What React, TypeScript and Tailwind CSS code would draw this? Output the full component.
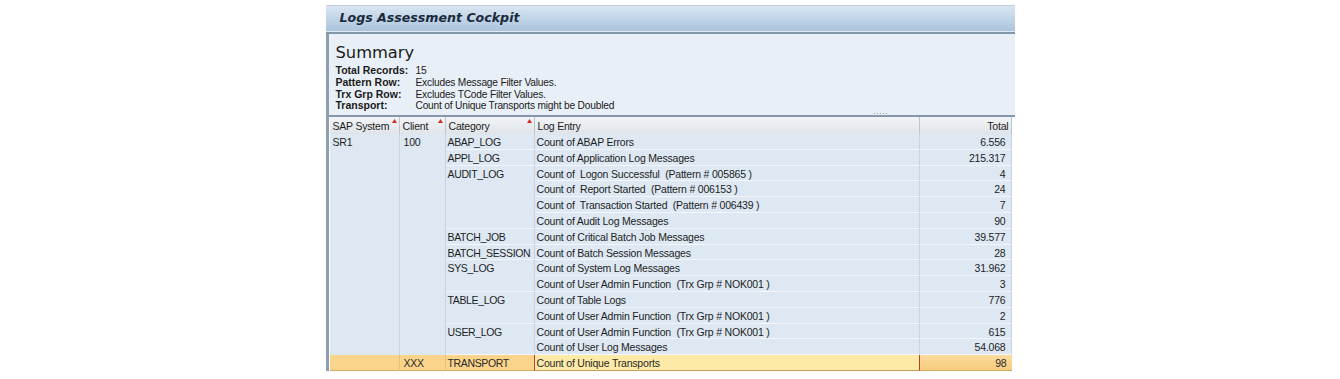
import React from 'react';

type Row = {
  cat?: string;
  span?: number;
  entry: string;
  total: string;
};

const rows: Row[] = [
  { cat: 'ABAP_LOG', span: 1, entry: 'Count of ABAP Errors', total: '6.556' },
  { cat: 'APPL_LOG', span: 1, entry: 'Count of Application Log Messages', total: '215.317' },
  { cat: 'AUDIT_LOG', span: 4, entry: 'Count of  Logon Successful  (Pattern # 005865 )', total: '4' },
  { entry: 'Count of  Report Started  (Pattern # 006153 )', total: '24' },
  { entry: 'Count of  Transaction Started  (Pattern # 006439 )', total: '7' },
  { entry: 'Count of Audit Log Messages', total: '90' },
  { cat: 'BATCH_JOB', span: 1, entry: 'Count of Critical Batch Job Messages', total: '39.577' },
  { cat: 'BATCH_SESSION', span: 1, entry: 'Count of Batch Session Messages', total: '28' },
  { cat: 'SYS_LOG', span: 2, entry: 'Count of System Log Messages', total: '31.962' },
  { entry: 'Count of User Admin Function  (Trx Grp # NOK001 )', total: '3' },
  { cat: 'TABLE_LOG', span: 2, entry: 'Count of Table Logs', total: '776' },
  { entry: 'Count of User Admin Function  (Trx Grp # NOK001 )', total: '2' },
  { cat: 'USER_LOG', span: 2, entry: 'Count of User Admin Function  (Trx Grp # NOK001 )', total: '615' },
  { entry: 'Count of User Log Messages', total: '54.068' },
];

const spanClass: Record<number, string> = {
  1: 'row-span-1',
  2: 'row-span-2',
  4: 'row-span-4',
};

const cell =
  'whitespace-pre leading-[15px] pt-[1px] border-r border-b border-r-[#c6d3e0] border-b-[#f3f7fb] bg-[#dde8f3] text-[#1e1e1e]';

// little red sort marker in the column header
const SortUp = () => (
  <svg width="5" height="4" viewBox="0 0 5 4" className="absolute top-[2px] right-[2px]">
    <path d="M2.5 0 L5 4 L0 4 Z" fill="#d42a1e" />
  </svg>
);

const HeadCell = ({ label, sort, right }: { label: string; sort?: boolean; right?: boolean }) => (
  <div
    className={`relative px-[3px] pt-[2px] leading-[15px] border-r border-[#bcc5ce] bg-linear-to-b from-[#f2f4f6] to-[#e0e4e9] text-[#1e1e1e] ${
      right ? 'text-right pr-[2px]' : ''
    }`}
  >
    {label}
    {sort && <SortUp />}
  </div>
);

export default function App() {
  return (
    <div className="w-full h-[379px] bg-white overflow-hidden font-['Liberation_Sans',Arial,sans-serif]">
      <div className="mx-auto w-[689px] pt-[5px]">
        {/* Title bar */}
        <div className="h-[26px] border-t border-[#c3ccd6] bg-linear-to-b from-[#d9e6f2] to-[#aac4dd] flex items-center pl-[14px]">
          <span className="font-['DejaVu_Sans',sans-serif] font-bold italic text-[12.6px] text-[#1b2a3c]">
            Logs Assessment Cockpit
          </span>
        </div>
        <div className="h-px bg-[#e2eaf2]" />
        <div className="h-[2px] bg-[#8496a9]" />

        <div className="border-l-[3px] border-[#8e9eb1]">
          {/* Summary panel */}
          <div className="h-[83px] bg-[#e9eff6] border-b-2 border-[#8497ab] flex flex-col pl-[7px] pt-[11px]">
            <div className="font-['DejaVu_Sans',sans-serif] text-[16.3px] leading-none text-[#1a1a1a]">Summary</div>
            <div className="mt-[4px] grid grid-cols-[80px_1fr] leading-[11.7px] text-[#1a1a1a]">
              <span className="font-bold text-[10.5px]">Total Records:</span>
              <span className="text-[10.2px] tracking-[-0.2px]">15</span>
              <span className="font-bold text-[10.5px]">Pattern Row:</span>
              <span className="text-[10.2px] tracking-[-0.2px]">Excludes Message Filter Values.</span>
              <span className="font-bold text-[10.5px]">Trx Grp Row:</span>
              <span className="text-[10.2px] tracking-[-0.2px]">Excludes TCode Filter Values.</span>
              <span className="font-bold text-[10.5px]">Transport:</span>
              <span className="text-[10.2px] tracking-[-0.2px]">Count of Unique Transports might be Doubled</span>
            </div>
            <div className="mt-auto mb-[1px] pl-[538px] flex gap-[2px]">
              {[0, 1, 2, 3, 4].map((i) => (
                <span key={i} className="w-px h-px bg-[#98a4b1]" />
              ))}
            </div>
          </div>

          {/* Grid */}
          <div className="pl-px pr-[3px] text-[10.5px] tracking-[-0.2px]">
            <div className="grid grid-cols-[70px_46px_89px_385px_92px] h-[17px] border-b border-[#c3ccd5]">
              <HeadCell label="SAP System" sort />
              <HeadCell label="Client" sort />
              <HeadCell label="Category" sort />
              <HeadCell label="Log Entry" />
              <HeadCell label="Total" right />
            </div>

            <div className="grid grid-cols-[70px_46px_89px_385px_92px] auto-rows-[15.8px]">
              <div className={`${cell} row-span-14 px-[3px] border-b-0`}>SR1</div>
              <div className={`${cell} row-span-14 px-[4px] border-b-0`}>100</div>
              {rows.map((r, i) => (
                <React.Fragment key={i}>
                  {r.cat && (
                    <div className={`${cell} ${spanClass[r.span ?? 1]} px-[2px] tracking-[-0.35px]`}>{r.cat}</div>
                  )}
                  <div className={`${cell} px-[2px]`}>{r.entry}</div>
                  <div className={`${cell} text-right pr-[5px]`}>{r.total}</div>
                </React.Fragment>
              ))}

              {/* Transport row (selected) */}
              <div className="bg-[#fad48a] border-r border-b border-r-[#e6c17c] border-b-[#d4ab66]" />
              <div className="leading-[15px] pt-[1px] px-[4px] bg-[#fad48a] border-r border-b border-r-[#e6c17c] border-b-[#d4ab66] text-[#2a2a2a]">
                XXX
              </div>
              <div className="leading-[15px] pt-[1px] px-[2px] tracking-[-0.35px] bg-[#fad48a] border-r border-b border-r-[#c43a2f] border-b-[#d4ab66] text-[#2a2a2a]">
                TRANSPORT
              </div>
              <div className="leading-[15px] pt-[1px] px-[2px] bg-[#fdeaa6] border-r border-b border-r-[#c43a2f] border-b-[#c9a060] text-[#2a2a2a]">
                Count of Unique Transports
              </div>
              <div className="leading-[15px] pt-[1px] text-right pr-[5px] bg-linear-to-b from-[#fbdc9e] to-[#f7cb7c] border-b border-[#d4ab66] text-[#2a2a2a]">
                98
              </div>
            </div>
          </div>
        </div>
      </div>
    </div>
  );
}
